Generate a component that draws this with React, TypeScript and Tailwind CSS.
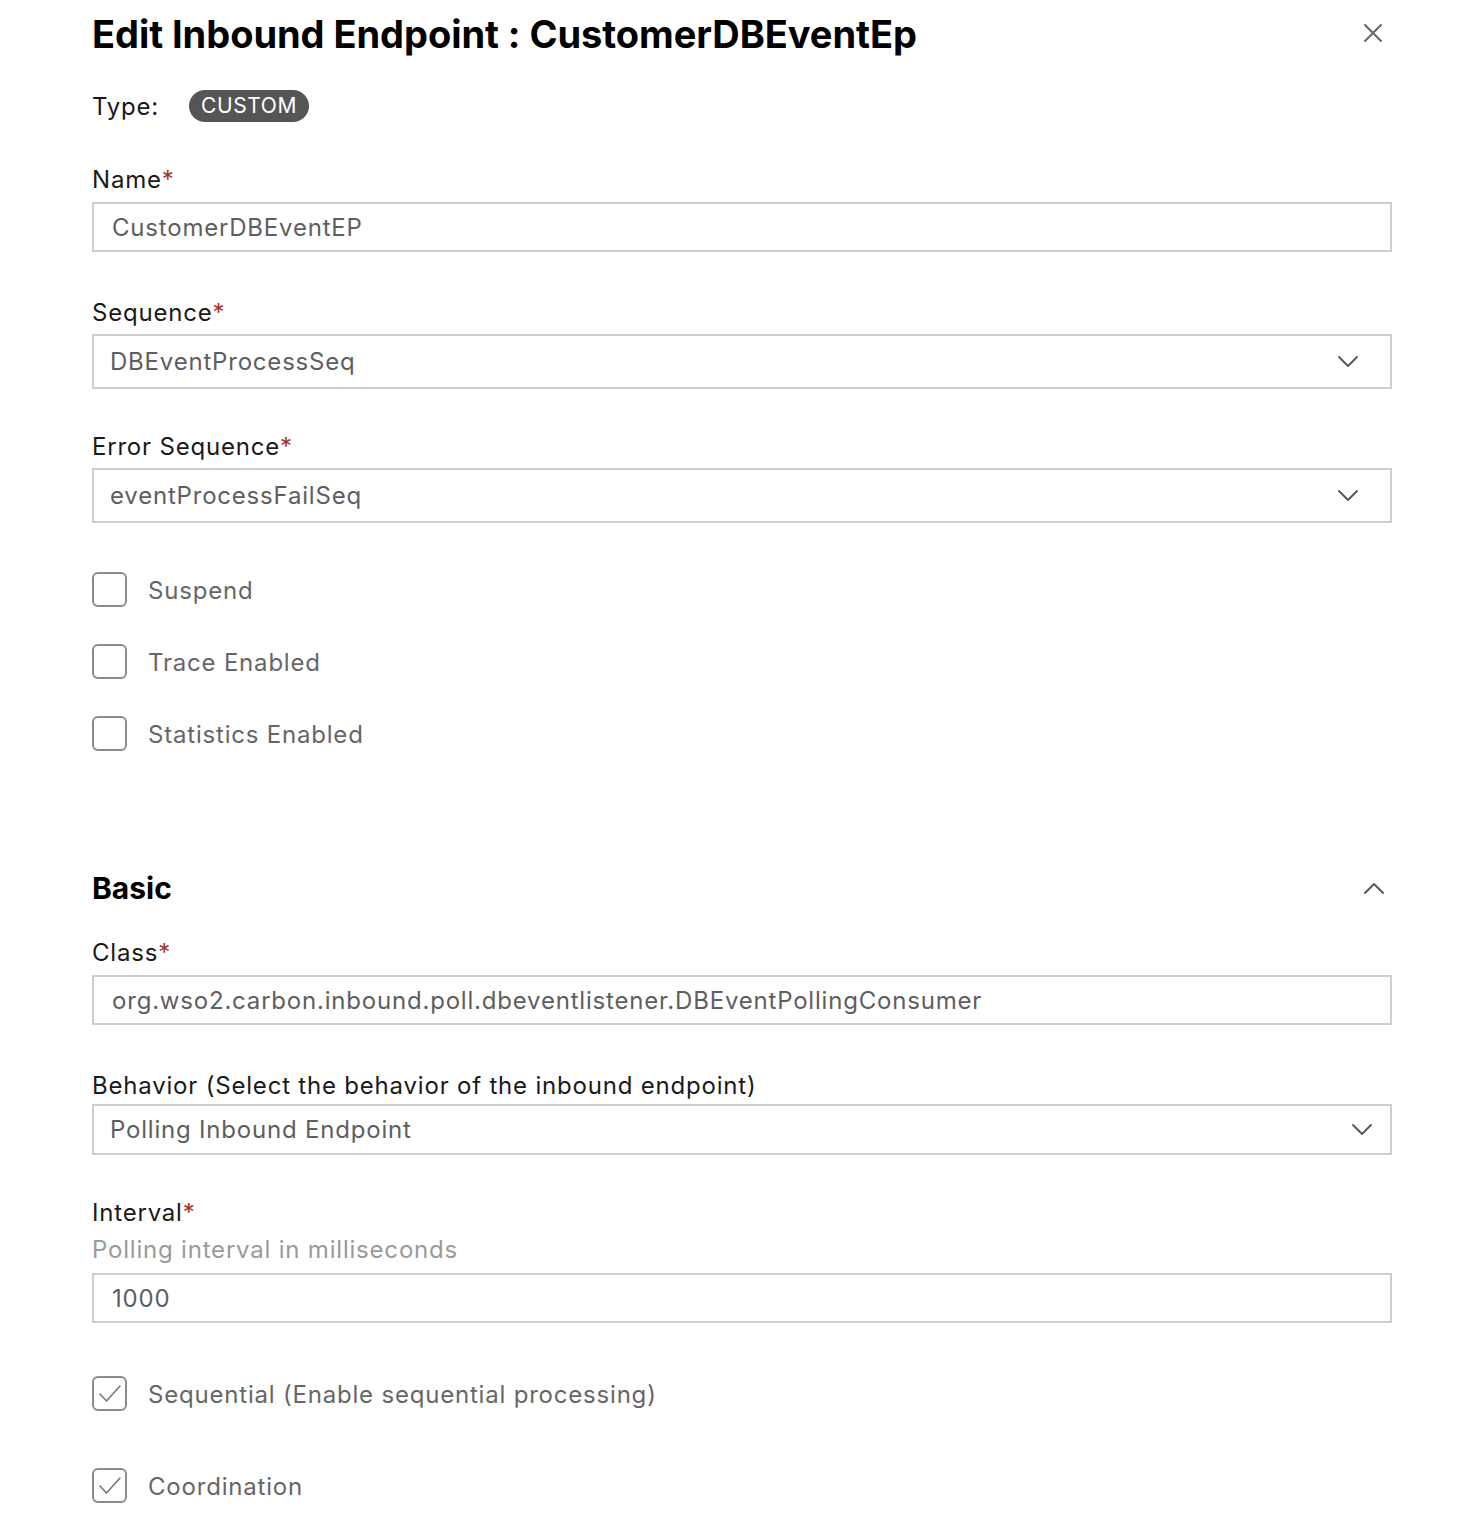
import React from "react";

const font = { fontFamily: "Inter, 'Noto Sans', sans-serif" };

function Chevron({ up = false }: { up?: boolean }) {
  return (
    <svg width="22" height="12" viewBox="0 0 22 12" fill="none">
      <path
        d={up ? "M2 11 L11 2 L20 11" : "M2 1 L11 10 L20 1"}
        stroke="#555"
        strokeWidth="1.8"
        strokeLinecap="round"
        strokeLinejoin="round"
      />
    </svg>
  );
}

function Label({ text, required = false, className = "" }: { text: string; required?: boolean; className?: string }) {
  return (
    <div className={`h-[30px] text-[24px] leading-[32px] tracking-[0.8px] text-[#1a1a1a] ${className}`}>
      {text}
      {required && <span className="text-[#a3321f]">*</span>}
    </div>
  );
}

function TextInput({ value, className = "" }: { value: string; className?: string }) {
  return (
    <div className={`h-[50px] border-2 border-[#cecece] flex items-center pl-[18px] pt-[2px] text-[24px] tracking-[0.8px] text-[#5e5e5e] ${className}`}>
      {value}
    </div>
  );
}

function Select({ value, h = "h-[55px]", chevronPr = "pr-[31px]", className = "" }: { value: string; h?: string; chevronPr?: string; className?: string }) {
  return (
    <div className={`${h} border-2 border-[#cecece] flex items-center justify-between pl-[16px] ${chevronPr} text-[24px] tracking-[0.8px] text-[#5e5e5e] ${className}`}>
      <span>{value}</span>
      <Chevron />
    </div>
  );
}

function Checkbox({ label, checked = false, className = "" }: { label: string; checked?: boolean; className?: string }) {
  return (
    <div className={`flex items-center h-[35px] ${className}`}>
      <div className="w-[35px] h-[35px] border-2 border-[#8c8c8c] rounded-[6px] flex items-center justify-center">
        {checked && (
          <svg width="24" height="20" viewBox="0 0 24 20" fill="none">
            <path d="M2 10 L8.5 17 L22 2" stroke="#777" strokeWidth="1.6" strokeLinecap="round" strokeLinejoin="round" />
          </svg>
        )}
      </div>
      <span className="ml-[21px] pt-[2px] text-[24px] tracking-[0.8px] text-[#666]">{label}</span>
    </div>
  );
}

export default function App() {
  return (
    <div className="w-[1480px] h-[1536px] bg-white overflow-hidden" style={font}>
      <div className="ml-[92px] w-[1300px] flex flex-col">
        <div className="h-[68px] flex items-center justify-between">
          <h1 className="text-[38px] font-bold text-black tracking-[-0.05px]">Edit Inbound Endpoint : CustomerDBEventEp</h1>
          <svg width="20" height="20" viewBox="0 0 20 20" className="mr-[9px] mb-[2px]">
            <path d="M2 2 L18 18 M18 2 L2 18" stroke="#666" strokeWidth="2" strokeLinecap="round" />
          </svg>
        </div>

        <div className="mt-[22px] h-[32px] flex items-center">
          <span className="text-[24px] tracking-[0.8px] text-[#1a1a1a] pt-[1px]">Type:</span>
          <span className="ml-[30px] h-[32px] px-[12px] rounded-full bg-[#555] text-white text-[21px] tracking-[0.6px] flex items-center">CUSTOM</span>
        </div>

        <Label text="Name" required className="mt-[42px]" />
        <TextInput value="CustomerDBEventEP" className="mt-[8px]" />

        <Label text="Sequence" required className="mt-[45px]" />
        <Select value="DBEventProcessSeq" className="mt-[7px]" />

        <Label text="Error Sequence" required className="mt-[42px]" />
        <Select value="eventProcessFailSeq" className="mt-[7px]" />

        <Checkbox label="Suspend" className="mt-[49px]" />
        <Checkbox label="Trace Enabled" className="mt-[37px]" />
        <Checkbox label="Statistics Enabled" className="mt-[37px]" />

        <div className="mt-[117px] h-[40px] flex items-center justify-between">
          <h2 className="text-[30px] font-bold text-black">Basic</h2>
          <div className="mr-[7px]">
            <Chevron up />
          </div>
        </div>

        <Label text="Class" required className="mt-[29px]" />
        <TextInput value="org.wso2.carbon.inbound.poll.dbeventlistener.DBEventPollingConsumer" className="mt-[8px]" />

        <Label text="Behavior (Select the behavior of the inbound endpoint)" className="mt-[45px]" />
        <Select value="Polling Inbound Endpoint" h="h-[51px]" chevronPr="pr-[17px]" className="mt-[4px]" />

        <Label text="Interval" required className="mt-[42px]" />
        <div className="mt-[8px] h-[30px] text-[24px] leading-[30px] tracking-[0.8px] text-[#9a9a9a]">Polling interval in milliseconds</div>
        <TextInput value="1000" className="mt-[8px]" />

        <Checkbox label="Sequential (Enable sequential processing)" checked className="mt-[53px]" />
        <Checkbox label="Coordination" checked className="mt-[57px]" />
      </div>
    </div>
  );
}
